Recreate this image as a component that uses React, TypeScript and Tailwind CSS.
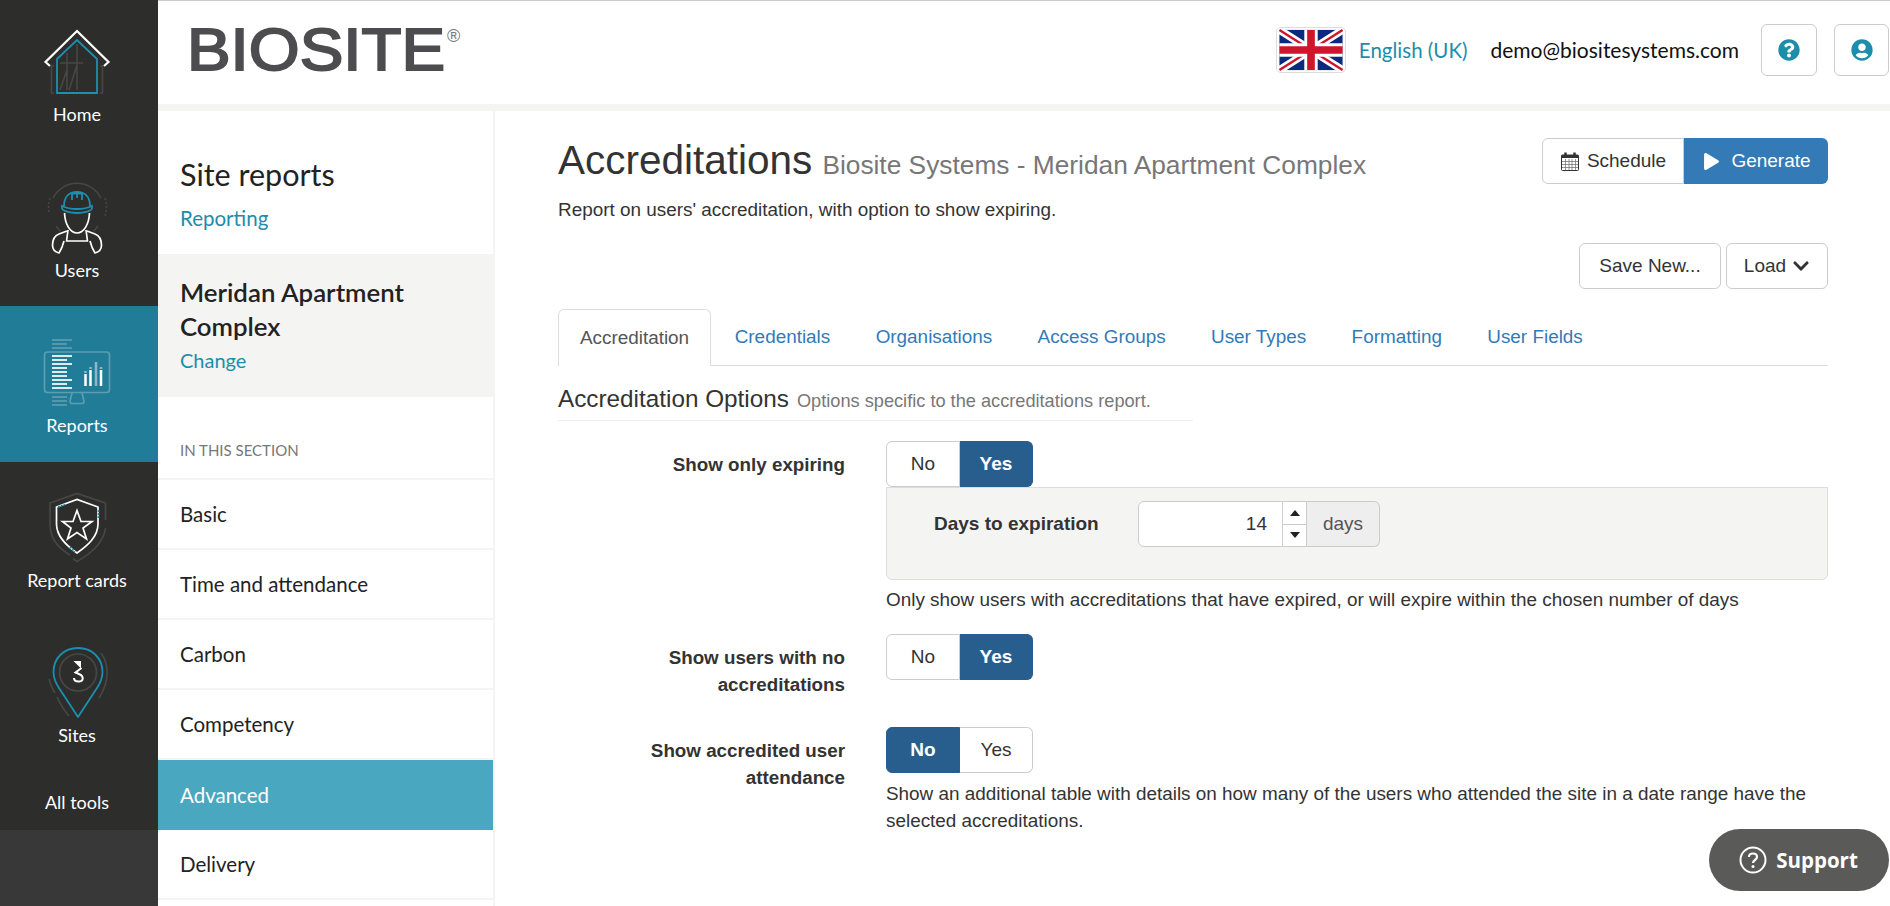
import React from "react";
import { FaQuestionCircle, FaUserCircle, FaChevronDown, FaPlay } from "react-icons/fa";

const TEAL = "#1c8fb0";
const GREY = "#474746";

function HomeIcon() {
  return (
    <svg width="80" height="80" viewBox="37 21 80 80" fill="none">
      <g stroke={GREY} strokeWidth="1.6">
        <path d="M54 66H51.500V93H54M100 66H102.500V93H100" />
        <path d="M77 44V90M67 53V90M60 63H83M60 90L67 70M69 90L77 65" />
      </g>
      <path d="M57 93V59L77 40L97 59V93Z" stroke={TEAL} strokeWidth="1.8" />
      <path d="M50 66L45.500 62L77 31L108.500 62L104 66" stroke="#fff" strokeWidth="2.200" />
    </svg>
  );
}

function UsersIcon() {
  return (
    <svg width="80" height="80" viewBox="37 177 80 80" fill="none">
      <path d="M53 198A27 27 0 0 1 101 198" stroke={GREY} strokeWidth="1.500" />
      <path d="M49 212A28 28 0 0 1 50 198M105 198A29 29 0 0 1 105 216" stroke={GREY} strokeWidth="1.500" strokeDasharray="2 2" />
      <path d="M56 226L60 231M98 226L94 231" stroke={GREY} strokeWidth="1.500" />
      <g stroke={TEAL} strokeWidth="1.800">
        <path d="M64 206C64 197 69 192 77 192C85 192 90 197 90 206" />
        <path d="M72 200V193.500H82V200M77 193V198" />
        <path d="M62 206C70 210 84 210 92 206V208C92 211 84 213 77 213C70 213 62 211 62 208Z" />
      </g>
      <g stroke="#fff" strokeWidth="1.700" strokeLinejoin="round">
        <path d="M64.500 213C65 224 70 233 77 233C84 233 89 224 89.500 213" />
        <path d="M68 230L66.500 241H87.500L86 230" />
        <path d="M67 231L59 234C54 236 52.500 240 52.500 245C52.500 250 55 252 59 253C61 250 63 245 64 241" />
        <path d="M87 231L95 234C100 236 101.500 240 101.500 245C101.500 250 99 252 95 253C93 250 91 245 90 241" />
      </g>
    </svg>
  );
}

function ReportsIcon() {
  const pale = "#5d9db2";
  const white = [[356,72],[360,67],[364,72],[368,67],[372,67],[376,67],[380,72],[384,67],[388,72]];
  const top = [[340,72],[344,67],[348,72]];
  const bottom = [[397,67],[401,67],[405,67]];
  return (
    <svg width="80" height="80" viewBox="37 332 80 80" fill="none">
      {top.concat(bottom).map(([y, x]) => (
        <path key={y} d={`M52 ${y}H${x}`} stroke={pale} strokeWidth="1.700" />
      ))}
      <rect x="44.500" y="352" width="65" height="40.500" rx="3" stroke={pale} strokeWidth="1.700" />
      <path d="M72 393L70 401C70 403 71 403.500 72 403.500H82C83 403.500 84 403 84 401L82 393" stroke={pale} strokeWidth="1.700" />
      {white.map(([y, x]) => (
        <path key={y} d={`M52 ${y}H${x}`} stroke="#fff" strokeWidth="1.700" />
      ))}
      <path d="M85.500 374V386M90.500 370V386M101 370V386" stroke="#fff" strokeWidth="2.500" />
      <path d="M85.500 371V373M90.500 367V369M101 367V369" stroke="#8fb6cb" strokeWidth="2.500" />
      <path d="M96 362V386" stroke="#8fb6cb" strokeWidth="2.500" />
    </svg>
  );
}

function CardsIcon() {
  return (
    <svg width="80" height="80" viewBox="37 487 80 80" fill="none">
      <path d="M70 555C58 548 50 538 50 524V503L77 493.500L105.500 503V520M105.500 528C104 540 94 552 77 561.500L73 558.500" stroke={GREY} strokeWidth="1.700" />
      <path d="M56.500 507L77 499.500L98 507V524C98 537 87 546 77 553C67 546 56.500 537 56.500 524Z" stroke="#fff" strokeWidth="1.700" />
      <path d="M58 507L65 504.500M98.500 510V518M70 547L75 552" stroke={TEAL} strokeWidth="1.700" strokeDasharray="2 1" />
      <path d="M77 510.500L81 521.500H92L83 528L86.500 539L77 532.500L67.500 539L71 528L62.500 521.500H73Z" stroke="#fff" strokeWidth="1.700" strokeLinejoin="miter" />
    </svg>
  );
}

function SitesIcon() {
  return (
    <svg width="80" height="80" viewBox="37 642 80 80" fill="none">
      <path d="M101 653C109 664 110 681 99 698" stroke={GREY} strokeWidth="1.700" />
      <path d="M49 679C51 686 53 690 55 693M57 697C60 704 64 710 69 716" stroke={GREY} strokeWidth="1.700" />
      <circle cx="78" cy="672.500" r="18.500" stroke={GREY} strokeWidth="1.700" />
      <path d="M78 717L59 688C55 682 53.500 678 53.500 672C53.500 658 64 648 78 648C92 648 102.500 658 102.500 672C102.500 678 101 682 97 688Z" stroke={TEAL} strokeWidth="1.800" strokeLinejoin="round" />
      <path d="M73.500 661H81V668.500Z" fill="#fff" />
      <path d="M81.500 668L75.500 672.500L79 674C84 676 84 681.500 78.500 681.500C75.500 681.500 74 680 74 678" stroke="#fff" strokeWidth="2" />
    </svg>
  );
}

function Flag() {
  return (
    <svg width="70" height="46" viewBox="0 0 70 46" className="rounded-[5px] border border-[#ddd]">
      <rect x="0" y="0" width="70" height="46" fill="#fff" />
      <rect x="2" y="2" width="66" height="42" fill="#0a2a7e" />
      <path d="M2 2L68 44M68 2L2 44" stroke="#fff" strokeWidth="8" />
      <path d="M2 2L35 23M68 44L35 23M68 2L35 23M2 44L35 23" stroke="#cf142b" strokeWidth="2.500" />
      <path d="M35 2V44M2 23H68" stroke="#fff" strokeWidth="14" />
      <path d="M35 2V44M2 23H68" stroke="#cf142b" strokeWidth="8" />
    </svg>
  );
}

function Logo() {
  return (
    <svg width="285" height="76" viewBox="0 0 285 76" className="text-[#4d4d4f]">
      <text x="0" y="58" fontSize="60" fontFamily="Liberation Sans" fill="currentColor" stroke="currentColor" strokeWidth="2" textLength="258" lengthAdjust="spacingAndGlyphs">BIOSITE</text>
      <text x="260" y="30" fontSize="18" fontFamily="Liberation Sans" fill="#777">®</text>
    </svg>
  );
}

function CalendarIcon() {
  return (
    <svg width="18" height="19" viewBox="0 0 18 19" fill="none">
      <rect x="0.500" y="3" width="17" height="15.500" rx="1" stroke="#333" />
      <rect x="0.500" y="3" width="17" height="3" fill="#333" />
      <path d="M4.500 0.500V4.500M13.500 0.500V4.500" stroke="#333" strokeWidth="2.500" />
      <path d="M1 9.500H17M1 12.500H17M1 15.500H17M4.500 7V18M8 7V18M11 7V18M14.500 7V18" stroke="#777" strokeWidth="0.800" />
    </svg>
  );
}

function SideItem({ label, icon, active, cls }: { label: string; icon: React.ReactNode; active?: boolean; cls: string }) {
  return (
    <div className={`flex flex-col items-center pr-1 ${cls} ${active ? "bg-[#217d97]" : ""}`}>
      {icon}
      <span className="text-[18px] leading-[26px] text-white">{label}</span>
    </div>
  );
}

function Toggle({ value }: { value: "No" | "Yes" }) {
  const on = "bg-[#285e8e] border-[#285e8e] text-white font-bold";
  const off = "bg-white border-[#ccc] text-[#333]";
  return (
    <div className="flex w-[147px] h-[46px] text-[19px]">
      <div className={`w-[74px] flex items-center justify-center border rounded-l-[6px] ${value === "No" ? on : off}`}>No</div>
      <div className={`w-[73px] flex items-center justify-center border border-l-0 rounded-r-[6px] ${value === "Yes" ? on : off}`}>Yes</div>
    </div>
  );
}

const navLinks = ["Basic", "Time and attendance", "Carbon", "Competency", "Advanced", "Delivery"];
const tabs = ["Credentials", "Organisations", "Access Groups", "User Types", "Formatting", "User Fields"];

export default function App() {
  return (
    <div className="relative flex h-[906px] w-[1890px] overflow-hidden bg-white font-['Liberation_Sans',sans-serif] text-[#333]">
      <aside className="flex w-[158px] shrink-0 flex-col bg-[#2d2d2c] font-['Lato',sans-serif]">
        <SideItem label="Home" icon={<HomeIcon />} cls="h-[150px] pt-[21px]" />
        <SideItem label="Users" icon={<UsersIcon />} cls="h-[156px] pt-[27px]" />
        <SideItem label="Reports" icon={<ReportsIcon />} cls="h-[156px] pt-[26px]" active />
        <SideItem label="Report cards" icon={<CardsIcon />} cls="h-[156px] pt-[25px]" />
        <SideItem label="Sites" icon={<SitesIcon />} cls="h-[156px] pt-[24px]" />
        <div className="flex h-[56px] items-center justify-center pr-1 text-[18px] text-white">All tools</div>
        <div className="flex-1 bg-[#383838]" />
      </aside>

      <div className="flex min-w-0 flex-1 flex-col">
        <header className="flex h-[111px] shrink-0 items-start border-t border-b-[7px] border-t-[#ccc] border-b-[#f4f4f3] pt-[23px] font-['Lato',sans-serif]">
          <div className="-mt-[12px] ml-[29px]"><Logo /></div>
          <div className="ml-auto flex items-center">
            <Flag />
            <span className="ml-[13px] text-[20.500px] text-[#1c8dab]">English (UK)</span>
            <span className="ml-[23px] text-[21px] text-[#111]">demo@biositesystems.com</span>
            <div className="ml-[22px] flex h-[52px] w-[56px] items-center justify-center rounded-[6px] border border-[#ccc] text-[22px] text-[#1c8dab]"><FaQuestionCircle /></div>
            <div className="ml-[17px] mr-[1px] flex h-[52px] w-[55px] items-center justify-center rounded-[6px] border border-[#ccc] text-[22px] text-[#1c8dab]"><FaUserCircle /></div>
          </div>
        </header>

        <div className="flex min-h-0 flex-1">
          <nav className="w-[337px] shrink-0 border-r-2 border-[#f4f4f3] font-['Lato',sans-serif]">
            <div className="h-[143px] pl-[22px] pt-[45px]">
              <div className="text-[30.500px] leading-[36px] text-[#222]">Site reports</div>
              <div className="mt-[12px] text-[20.500px] leading-[28px] text-[#1c8dab]">Reporting</div>
            </div>
            <div className="h-[143px] bg-[#f4f4f2] pl-[22px] pt-[21px]">
              <div className="text-[25.800px] leading-[34px] font-semibold text-[#222]">Meridan Apartment<br />Complex</div>
              <div className="mt-[2px] text-[20px] leading-[30px] text-[#1c8dab]">Change</div>
            </div>
            <div className="h-[83px] border-b-2 border-[#f4f4f3] pl-[22px] pt-[42px] text-[15px] leading-[22px] text-[#777]">IN THIS SECTION</div>
            {navLinks.map((n) => (
              <div key={n} className={`flex h-[70px] items-center pl-[22px] text-[20.500px] ${n === "Advanced" ? "bg-[#4aa7c0] text-white" : "border-b-2 border-[#f4f4f3] text-[#222]"}`}>{n}</div>
            ))}
          </nav>

          <main className="min-w-0 flex-1 pl-[63px] pr-[62px] pt-[27px]">
            <div className="flex h-[46px] items-start justify-between">
              <div className="flex items-baseline">
                <span className="text-[40.500px] leading-[44px] text-[#333]">Accreditations</span>
                <span className="ml-[10px] text-[26.300px] leading-[44px] text-[#777]">Biosite Systems - Meridan Apartment Complex</span>
              </div>
              <div className="flex h-[46px] text-[19px]">
                <div className="flex w-[142px] items-center justify-center gap-[8px] rounded-l-[6px] border border-[#ccc] pl-[1px]"><CalendarIcon />Schedule</div>
                <div className="flex w-[144px] items-center justify-center gap-[11px] rounded-r-[6px] bg-[#337ab7] pl-[2px] text-white"><FaPlay className="text-[17px]" />Generate</div>
              </div>
            </div>
            <p className="mt-[12px] text-[18.900px] leading-[27px]">Report on users' accreditation, with option to show expiring.</p>
            <div className="mt-[20px] flex h-[46px] justify-end gap-[5px] text-[19px]">
              <div className="flex w-[142px] items-center justify-center rounded-[6px] border border-[#ccc]">Save New...</div>
              <div className="flex w-[102px] items-center justify-center gap-[6px] rounded-[6px] border border-[#ccc]">Load<FaChevronDown className="text-[18px]" /></div>
            </div>

            <div className="mt-[20px] flex h-[57px] border-b border-[#ddd] text-[18.900px]">
              <div className="flex h-[57px] w-[153px] items-center justify-center rounded-t-[6px] border border-b-0 border-[#ddd] bg-white text-[#555]">Accreditation</div>
              <div className="ml-[1px] flex">
                {tabs.map((t) => (
                  <div key={t} className="flex h-[56px] items-center px-[22.700px] text-[#337ab7]">{t}</div>
                ))}
              </div>
            </div>

            <div className="mt-[16px] flex h-[39px] w-[635px] items-baseline gap-[8px] border-b border-[#eee] pt-[1px]">
              <span className="text-[24.300px] leading-[32px]">Accreditation Options</span>
              <span className="text-[18.200px] text-[#777]">Options specific to the accreditations report.</span>
            </div>

            <div className="mt-[20px] flex">
              <div className="w-[287px] pt-[10px] pr-0 text-right text-[18.800px] leading-[27px] font-bold">Show only expiring</div>
              <div className="ml-[41px] flex-1">
                <Toggle value="Yes" />
                <div className="h-[93px] rounded-b-[6px] border border-[#ddd] bg-[#f4f4f3] pl-[47px] pt-[13px]">
                  <div className="flex h-[46px] items-center">
                    <span className="w-[204px] text-[19px] font-bold">Days to expiration</span>
                    <div className="flex h-[46px] w-[242px] text-[19px]">
                      <div className="flex w-[145px] items-center justify-end rounded-l-[6px] border border-[#ccc] bg-white pr-[15px]">14</div>
                      <div className="flex w-[24px] flex-col border-y border-r border-[#ccc] bg-white">
                        <div className="flex flex-1 items-center justify-center border-b border-[#ccc]"><div className="h-0 w-0 border-x-[5px] border-b-[6px] border-x-transparent border-b-[#222]" /></div>
                        <div className="flex flex-1 items-center justify-center"><div className="h-0 w-0 border-x-[5px] border-t-[6px] border-x-transparent border-t-[#222]" /></div>
                      </div>
                      <div className="flex w-[73px] items-center justify-center rounded-r-[6px] border-y border-r border-[#ccc] bg-[#eee] text-[#555]">days</div>
                    </div>
                  </div>
                </div>
                <p className="mt-[6px] text-[18.900px] leading-[27px]">Only show users with accreditations that have expired, or will expire within the chosen number of days</p>
              </div>
            </div>

            <div className="mt-[21px] flex">
              <div className="w-[287px] pt-[10px] text-right text-[18.800px] leading-[27px] font-bold">Show users with no<br />accreditations</div>
              <div className="ml-[41px]"><Toggle value="Yes" /></div>
            </div>

            <div className="mt-[29px] flex">
              <div className="w-[287px] pt-[10px] text-right text-[18.800px] leading-[27px] font-bold">Show accredited user<br />attendance</div>
              <div className="ml-[41px] flex-1">
                <Toggle value="No" />
                <p className="mt-[7px] text-[18.900px] leading-[27px]">Show an additional table with details on how many of the users who attended the site in a date range have the<br />selected accreditations.</p>
              </div>
            </div>
          </main>
        </div>
      </div>

      <div className="absolute left-[1709px] top-[829px] flex h-[62px] w-[180px] items-center justify-center gap-[9px] rounded-full bg-[#5a5a59] pr-[1px] font-['Open_Sans',sans-serif] text-[20.500px] font-bold text-white">
        <svg width="28" height="28" viewBox="0 0 28 28" fill="none">
          <circle cx="14" cy="14" r="12.500" stroke="#fff" strokeWidth="2" />
          <path d="M10 11C10 8.500 12 7.500 14 7.500C16.500 7.500 18 9 18 11C18 14 14 14 14 17" stroke="#fff" strokeWidth="2.200" />
          <circle cx="14" cy="20.500" r="1.500" fill="#fff" />
        </svg>
        Support
      </div>
    </div>
  );
}
